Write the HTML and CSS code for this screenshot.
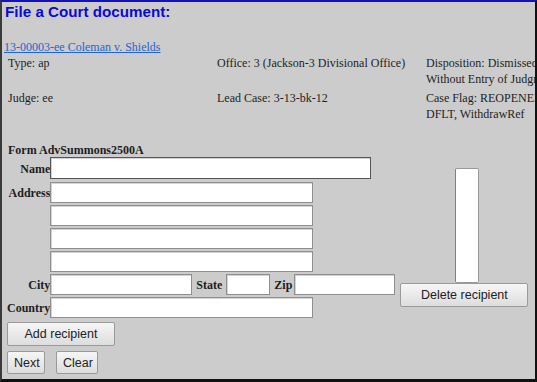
FILE: index.html
```html
<!DOCTYPE html>
<html>
	<head>
		<link rel="stylesheet" href="styles.css">
	</head>
	<body>
		<div class="frame">
			<div class="title">File a Court document:</div>
			<a class="caselink" href="#">13-00003-ee Coleman v. Shields</a>
			<div class="info">
				<div class="cell">Type: ap</div>
				<div class="cell">Office: 3 (Jackson-3 Divisional Office)</div>
				<div class="cell">Disposition: Dismissed<br>Without Entry of Judgment</div>
				<div class="cell">Judge: ee</div>
				<div class="cell">Lead Case: 3-13-bk-12</div>
				<div class="cell">Case Flag: REOPENED,<br>DFLT, WithdrawRef</div>
			</div>
			<div class="formname">Form AdvSummons2500A</div>
			<div class="formarea">
				<div class="fields">
					<label class="lbl">Name</label>
					<input type="text" class="txt" id="NAME">
					<label class="lbl">Address</label>
					<input type="text" class="txt addr">
					<span></span>
					<input type="text" class="txt addr">
					<span></span>
					<input type="text" class="txt addr">
					<span></span>
					<input type="text" class="txt addr">
					<label class="lbl">City</label>
					<div class="cityrow">
						<input type="text" class="txt" id="CITY">
						<label class="lbl">State</label>
						<input type="text" class="txt" id="STATE">
						<label class="lbl">Zip</label>
						<input type="text" class="txt" id="ZIP">
					</div>
					<label class="lbl">Country</label>
					<input type="text" class="txt addr">
				</div>
				<div class="recipients">
					<select class="rlist" size="8"></select>
					<input type="button" class="btn" id="DEL" value="Delete recipient">
				</div>
			</div>
			<div class="addrow"><input type="button" class="btn" id="ADD" value="Add recipient"></div>
			<div class="navrow">
				<input type="button" class="btn" id="NEXT" value="Next">
				<input type="button" class="btn" id="CLEAR" value="Clear">
			</div>
		</div>
	</body>
</html>
```

FILE: styles.css
```css
html, body{
	margin: 0;
	padding: 0;
	background-color: #cccccc;
}
.frame{
	box-sizing: border-box;
	width: 537px;
	height: 382px;
	overflow: hidden;
	background-color: #cccccc;
	border-top: 2px solid #1414b4;
	border-left: 2px solid #3a3a3a;
	border-right: 2px solid #111;
	border-bottom: 3px solid #111;
	font-family: "Liberation Serif", serif;
	font-size: 12px;
	line-height: 16px;
	color: #1e1e1e;
}
.title{
	margin-top: 1px;
	padding-left: 3px;
	font-family: "Liberation Sans", Arial, sans-serif;
	font-weight: bold;
	font-size: 15.2px;
	line-height: 18px;
	color: #0a0ad8;
}
.caselink{
	display: block;
	width: max-content;
	margin-top: 18px;
	margin-left: 2px;
	color: #2266cc;
	text-decoration: underline;
}
.info{
	display: grid;
	grid-template-columns: 209px 209px 209px;
	row-gap: 3px;
	padding-left: 6px;
	margin-bottom: 22px;
}
.cell{
	white-space: nowrap;
	min-height: 32px;
}
.formname{
	padding-left: 6px;
	font-weight: bold;
	line-height: 13px;
}
.formarea{
	display: flex;
	padding-left: 5px;
}
.fields{
	display: grid;
	grid-template-columns: auto auto;
	row-gap: 2px;
	align-items: center;
	justify-items: start;
}
.lbl{
	font-weight: bold;
	justify-self: end;
	line-height: 14px;
}
.txt{
	box-sizing: border-box;
	height: 21px;
	margin: 0;
	padding: 1px 3px;
	background: #fff;
	border: 1px solid #8f8f8f;
	box-shadow: inset 1px 1px 0 #d4d4d4;
	font-family: "Liberation Sans", Arial, sans-serif;
	font-size: 12px;
}
#NAME{
	width: 321px;
	height: 22px;
	margin-bottom: 1px;
	border-color: #555;
}
.addr{
	width: 263px;
}
.cityrow{
	display: flex;
	align-items: center;
	gap: 4px;
}
#CITY{
	width: 142px;
}
#STATE{
	width: 44px;
}
#ZIP{
	width: 101px;
	margin-left: -2px;
}
.recipients{
	display: flex;
	flex-direction: column;
	margin-left: 5px;
	margin-top: 11px;
}
.rlist{
	box-sizing: border-box;
	width: 24px;
	height: 115px;
	margin: 0 0 0 55px;
	background: #fff;
	border: 1px solid #9a9a9a;
	border-left-color: #808080;
	overflow: hidden;
}
.btn{
	box-sizing: border-box;
	margin: 0;
	padding: 0 6px;
	height: 23px;
	background: linear-gradient(#f6f6f6, #dddddd);
	border: 1px solid #9a9a9a;
	border-radius: 2px;
	font-family: "Liberation Sans", Arial, sans-serif;
	font-size: 12.5px;
	color: #222;
}
#DEL{
	width: 128px;
	height: 24px;
}
.addrow{
	padding-left: 5px;
	margin-top: 4px;
}
#ADD{
	width: 108px;
	height: 24px;
}
.navrow{
	display: flex;
	gap: 11px;
	padding-left: 5px;
	margin-top: 5px;
}
#NEXT{
	width: 38px;
}
#CLEAR{
	width: 42px;
}
```
